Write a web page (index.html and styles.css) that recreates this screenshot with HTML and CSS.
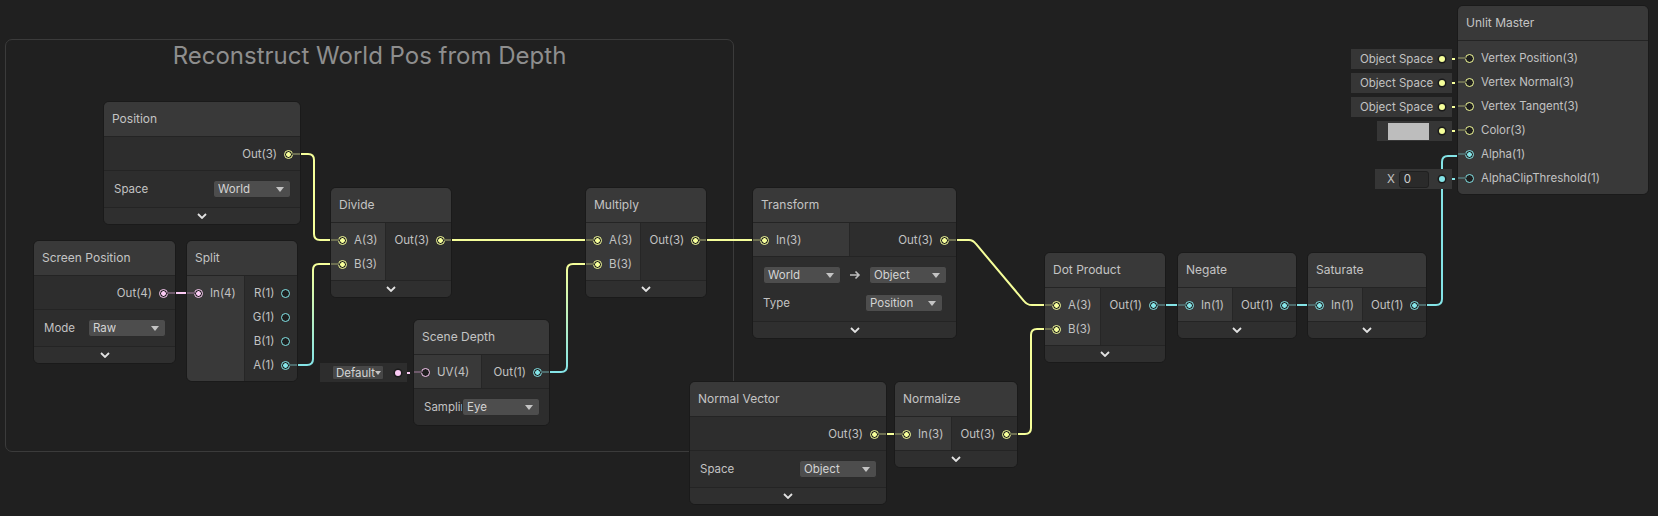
FILE: index.html
```html
<!DOCTYPE html>
<html lang="en">
<head>
  <meta charset="UTF-8" />
  <title>Shader Graph - Reconstruct World Pos</title>
  <link rel="stylesheet" href="styles.css">
</head>
<body>
  <div class="graph">

    <!-- Group -->
    <div class="group">
      <div class="group-title">Reconstruct World Pos from Depth</div>
    </div>

    <!-- Wires (behind nodes) -->
    <svg class="wires" width="1658" height="516" viewBox="0 0 1658 516">
      <defs>
        <linearGradient id="g1" gradientUnits="userSpaceOnUse" x1="0" y1="365" x2="0" y2="264">
          <stop offset="0" stop-color="#84e4e7"/>
          <stop offset="1" stop-color="#f6ff9a"/>
        </linearGradient>
        <linearGradient id="g2" gradientUnits="userSpaceOnUse" x1="0" y1="372" x2="0" y2="264">
          <stop offset="0" stop-color="#84e4e7"/>
          <stop offset="1" stop-color="#f6ff9a"/>
        </linearGradient>
      </defs>
      <g fill="none" stroke-width="2">
        <path stroke="#f6ff9a" d="M288,154 H308 Q314,154 314,160 V234 Q314,240 320,240 H343"/>
        <path stroke="url(#g1)" d="M286,365 H307 Q313,365 313,359 V270 Q313,264 319,264 H343"/>
        <path stroke="#fbcbf4" d="M163,293 H199"/>
        <path stroke="#f6ff9a" d="M439,240 H598"/>
        <path stroke="url(#g2)" d="M537,372 H561 Q567,372 567,366 V270 Q567,264 573,264 H598"/>
        <path stroke="#f6ff9a" d="M694,240 H765"/>
        <path stroke="#f6ff9a" d="M944,240 H969 Q973,240 976,244 L1024,301 Q1027,305 1032,305 H1057"/>
        <path stroke="#f6ff9a" d="M1005,434 H1025 Q1031,434 1031,428 V335 Q1031,329 1037,329 H1057"/>
        <path stroke="#f6ff9a" d="M874,434 H907"/>
        <path stroke="#84e4e7" d="M1153,305 H1190"/>
        <path stroke="#84e4e7" d="M1284,305 H1320"/>
        <path stroke="#84e4e7" d="M1414,305 H1436 Q1442,305 1442,299 V162 Q1442,156 1448,156 H1470"/>
      </g>
    </svg>

    <!-- Position -->
    <div class="node n-position">
      <div class="node-title">Position</div>
      <div class="ports">
        <div class="col out">
          <div class="port linked y"><span>Out(3)</span><i class="dot"></i></div>
        </div>
      </div>
      <div class="settings">
        <div class="setting"><span class="label">Space</span><div class="dropdown"><span>World</span><i class="caret"></i></div></div>
      </div>
      <div class="collapse"><svg width="10" height="6"><path d="M1 1l4 4 4-4" /></svg></div>
    </div>

    <!-- Screen Position -->
    <div class="node n-screen">
      <div class="node-title">Screen Position</div>
      <div class="ports">
        <div class="col out">
          <div class="port linked p"><span>Out(4)</span><i class="dot"></i></div>
        </div>
      </div>
      <div class="settings">
        <div class="setting"><span class="label">Mode</span><div class="dropdown"><span>Raw</span><i class="caret"></i></div></div>
      </div>
      <div class="collapse"><svg width="10" height="6"><path d="M1 1l4 4 4-4" /></svg></div>
    </div>

    <!-- Split -->
    <div class="node n-split">
      <div class="node-title">Split</div>
      <div class="ports last">
        <div class="col in">
          <div class="port linked p"><i class="dot"></i><span>In(4)</span></div>
        </div>
        <div class="col out">
          <div class="port c"><span>R(1)</span><i class="dot"></i></div>
          <div class="port c"><span>G(1)</span><i class="dot"></i></div>
          <div class="port c"><span>B(1)</span><i class="dot"></i></div>
          <div class="port linked c"><span>A(1)</span><i class="dot"></i></div>
        </div>
      </div>
    </div>

    <!-- Divide -->
    <div class="node n-divide">
      <div class="node-title">Divide</div>
      <div class="ports">
        <div class="col in">
          <div class="port linked y"><i class="dot"></i><span>A(3)</span></div>
          <div class="port linked y"><i class="dot"></i><span>B(3)</span></div>
        </div>
        <div class="col out">
          <div class="port linked y"><span>Out(3)</span><i class="dot"></i></div>
        </div>
      </div>
      <div class="collapse"><svg width="10" height="6"><path d="M1 1l4 4 4-4" /></svg></div>
    </div>

    <!-- Scene Depth -->
    <div class="inline-input n-default">
      <div class="dropdown mini"><span>Default</span><i class="caret"></i></div>
      <i class="wdot p"></i>
    </div>
    <div class="node n-depth">
      <div class="node-title">Scene Depth</div>
      <div class="ports">
        <div class="col in">
          <div class="port inline p"><i class="dot"></i><span>UV(4)</span></div>
        </div>
        <div class="col out">
          <div class="port linked c"><span>Out(1)</span><i class="dot"></i></div>
        </div>
      </div>
      <div class="settings last">
        <div class="setting"><span class="label clip">Sampling</span><div class="dropdown"><span>Eye</span><i class="caret"></i></div></div>
      </div>
    </div>

    <!-- Multiply -->
    <div class="node n-multiply">
      <div class="node-title">Multiply</div>
      <div class="ports">
        <div class="col in">
          <div class="port linked y"><i class="dot"></i><span>A(3)</span></div>
          <div class="port linked y"><i class="dot"></i><span>B(3)</span></div>
        </div>
        <div class="col out">
          <div class="port linked y"><span>Out(3)</span><i class="dot"></i></div>
        </div>
      </div>
      <div class="collapse"><svg width="10" height="6"><path d="M1 1l4 4 4-4" /></svg></div>
    </div>

    <!-- Transform -->
    <div class="node n-transform">
      <div class="node-title">Transform</div>
      <div class="ports">
        <div class="col in">
          <div class="port linked y"><i class="dot"></i><span>In(3)</span></div>
        </div>
        <div class="col out">
          <div class="port linked y"><span>Out(3)</span><i class="dot"></i></div>
        </div>
      </div>
      <div class="settings">
        <div class="setting">
          <div class="dropdown"><span>World</span><i class="caret"></i></div>
          <svg class="arrow" width="12" height="10" viewBox="0 0 12 10"><path d="M1 5h9M6.5 1.5L10 5l-3.5 3.5" /></svg>
          <div class="dropdown"><span>Object</span><i class="caret"></i></div>
        </div>
        <div class="setting type-row"><span class="label">Type</span><div class="dropdown"><span>Position</span><i class="caret"></i></div></div>
      </div>
      <div class="collapse"><svg width="10" height="6"><path d="M1 1l4 4 4-4" /></svg></div>
    </div>

    <!-- Normal Vector -->
    <div class="node n-normal">
      <div class="node-title">Normal Vector</div>
      <div class="ports">
        <div class="col out">
          <div class="port linked y"><span>Out(3)</span><i class="dot"></i></div>
        </div>
      </div>
      <div class="settings">
        <div class="setting"><span class="label">Space</span><div class="dropdown"><span>Object</span><i class="caret"></i></div></div>
      </div>
      <div class="collapse"><svg width="10" height="6"><path d="M1 1l4 4 4-4" /></svg></div>
    </div>

    <!-- Normalize -->
    <div class="node n-normalize">
      <div class="node-title">Normalize</div>
      <div class="ports">
        <div class="col in">
          <div class="port linked y"><i class="dot"></i><span>In(3)</span></div>
        </div>
        <div class="col out">
          <div class="port linked y"><span>Out(3)</span><i class="dot"></i></div>
        </div>
      </div>
      <div class="collapse"><svg width="10" height="6"><path d="M1 1l4 4 4-4" /></svg></div>
    </div>

    <!-- Dot Product -->
    <div class="node n-dot">
      <div class="node-title">Dot Product</div>
      <div class="ports">
        <div class="col in">
          <div class="port linked y"><i class="dot"></i><span>A(3)</span></div>
          <div class="port linked y"><i class="dot"></i><span>B(3)</span></div>
        </div>
        <div class="col out">
          <div class="port linked c"><span>Out(1)</span><i class="dot"></i></div>
        </div>
      </div>
      <div class="collapse"><svg width="10" height="6"><path d="M1 1l4 4 4-4" /></svg></div>
    </div>

    <!-- Negate -->
    <div class="node n-negate">
      <div class="node-title">Negate</div>
      <div class="ports">
        <div class="col in">
          <div class="port linked c"><i class="dot"></i><span>In(1)</span></div>
        </div>
        <div class="col out">
          <div class="port linked c"><span>Out(1)</span><i class="dot"></i></div>
        </div>
      </div>
      <div class="collapse"><svg width="10" height="6"><path d="M1 1l4 4 4-4" /></svg></div>
    </div>

    <!-- Saturate -->
    <div class="node n-saturate">
      <div class="node-title">Saturate</div>
      <div class="ports">
        <div class="col in">
          <div class="port linked c"><i class="dot"></i><span>In(1)</span></div>
        </div>
        <div class="col out">
          <div class="port linked c"><span>Out(1)</span><i class="dot"></i></div>
        </div>
      </div>
      <div class="collapse"><svg width="10" height="6"><path d="M1 1l4 4 4-4" /></svg></div>
    </div>

    <!-- Unlit Master inline inputs -->
    <div class="inline-input w-space1"><span>Object Space</span><i class="wdot y"></i></div>
    <div class="inline-input w-space2"><span>Object Space</span><i class="wdot y"></i></div>
    <div class="inline-input w-space3"><span>Object Space</span><i class="wdot y"></i></div>
    <div class="inline-input w-color"><i class="swatch"></i><i class="wdot y"></i></div>
    <div class="inline-input w-clip"><span class="axis">X</span><span class="field">0</span><i class="wdot c"></i></div>

    <!-- Unlit Master -->
    <div class="node n-master">
      <div class="node-title">Unlit Master</div>
      <div class="ports last">
        <div class="col in">
          <div class="port inline y"><i class="dot"></i><span>Vertex Position(3)</span></div>
          <div class="port inline y"><i class="dot"></i><span>Vertex Normal(3)</span></div>
          <div class="port inline y"><i class="dot"></i><span>Vertex Tangent(3)</span></div>
          <div class="port inline y"><i class="dot"></i><span>Color(3)</span></div>
          <div class="port linked c"><i class="dot"></i><span>Alpha(1)</span></div>
          <div class="port inline c"><i class="dot"></i><span>AlphaClipThreshold(1)</span></div>
        </div>
      </div>
    </div>

  </div>
</body>
</html>
```

FILE: styles.css
```css
body {
  margin: 0;
  background-color: #202020;
  font-family: Inter, "Noto Sans", sans-serif;
  overflow: hidden;
}

.graph {
  position: relative;
  width: 1658px;
  height: 516px;
}

.wires {
  position: absolute;
  left: 0;
  top: 0;
}

/* Group box */
.group {
  position: absolute;
  left: 5px;
  top: 39px;
  width: 729px;
  height: 413px;
  box-sizing: border-box;
  border: 1px solid #3b3b3b;
  border-radius: 7px;
}

.group-title {
  text-align: center;
  font-size: 24px;
  line-height: 30px;
  padding-top: 1px;
  color: #8e8e8e;
}

/* Nodes */
.node {
  position: absolute;
  box-sizing: border-box;
  background-color: #2d2d2d;
  border: 1px solid #1a1a1a;
  border-radius: 6px;
  overflow: hidden;
}

.node-title {
  height: 34px;
  line-height: 34px;
  padding: 0 8px;
  background-color: #393939;
  border-bottom: 1px solid #242424;
  color: #c4c4c4;
  font-size: 12px;
  white-space: nowrap;
}

.ports {
  display: flex;
  border-bottom: 1px solid #242424;
}

.ports.last {
  border-bottom: none;
}

.col {
  flex: 1 1 auto;
  padding: 5px 0 4px;
}

.col.in {
  background-color: #393939;
}

.col.in + .col.out {
  border-left: 1px solid #262626;
}

.col.out {
  background-color: #2d2d2d;
}

.port {
  --pc: #f6ff9a;
  --stub: #6d6f52;
  height: 24px;
  display: flex;
  align-items: center;
  gap: 7px;
  font-size: 11.5px;
  color: #c2c2c2;
  white-space: nowrap;
}

.port.c {
  --pc: #84e4e7;
  --stub: #4d6b6c;
}

.port.p {
  --pc: #fbcbf4;
  --stub: #6e5a6b;
}

.col.in .port {
  padding: 0 8px 0 7px;
}

.col.out .port {
  justify-content: flex-end;
  padding: 0 7px 0 8px;
}

.dot {
  position: relative;
  flex: none;
  width: 9px;
  height: 9px;
  box-sizing: border-box;
  border: 1.5px solid var(--pc);
  border-radius: 50%;
  background-color: #1e1e1e;
}

.port.linked .dot {
  background: radial-gradient(circle, var(--pc) 0 2px, #1e1e1e 2.6px);
}

.port.linked .dot::before,
.port.inline .dot::before {
  content: '';
  position: absolute;
  top: 2px;
  width: 8px;
  height: 2px;
  background-color: var(--stub);
}

.col.in .port .dot::before {
  right: 100%;
}

.col.out .port .dot::before {
  left: 100%;
}

/* Settings */
.settings {
  display: flex;
  flex-direction: column;
  gap: 8px;
  padding: 8px 9px 8px 10px;
  border-bottom: 1px solid #242424;
  background-color: #2d2d2d;
}

.settings.last {
  border-bottom: none;
}

.setting {
  height: 20px;
  display: flex;
  align-items: center;
  justify-content: space-between;
  font-size: 11.5px;
  color: #c2c2c2;
}

.setting.type-row {
  padding-right: 4px;
}

.label.clip {
  flex: 1;
  min-width: 0;
  overflow: hidden;
  white-space: nowrap;
}

.dropdown {
  flex: none;
  width: 78px;
  height: 18px;
  box-sizing: border-box;
  display: flex;
  align-items: center;
  justify-content: space-between;
  padding: 0 6px 0 4px;
  background-color: #4d4d4d;
  border: 1px solid #2c2c2c;
  border-radius: 3px;
  color: #d4d4d4;
  font-size: 11.5px;
  overflow: hidden;
}

.dropdown span {
  overflow: hidden;
  white-space: nowrap;
}

.caret {
  flex: none;
  width: 0;
  height: 0;
  border-left: 4px solid transparent;
  border-right: 4px solid transparent;
  border-top: 5px solid #c4c4c4;
}

.dropdown.mini {
  width: 52px;
  height: 15px;
  padding: 0 3px 0 3px;
  border-radius: 2px;
  background-color: #474747;
  justify-content: flex-start;
}

.dropdown.mini span {
  width: 39px;
  flex: none;
}

.dropdown.mini .caret {
  border-left-width: 3.5px;
  border-right-width: 3.5px;
  border-top-width: 4px;
}

.arrow path {
  fill: none;
  stroke: #bdbdbd;
  stroke-width: 1.6;
}

.collapse {
  height: 16px;
  display: flex;
  align-items: center;
  justify-content: center;
  background-color: #2f2f2f;
}

.collapse path {
  fill: none;
  stroke: #e2e2e2;
  stroke-width: 1.8;
}

/* Inline port inputs */
.inline-input {
  position: absolute;
  height: 20px;
  box-sizing: border-box;
  display: flex;
  align-items: center;
  justify-content: space-between;
  padding: 0 7px 0 9px;
  background-color: #363636;
  font-size: 11.5px;
  color: #c2c2c2;
}

.inline-input::after {
  content: '';
  position: absolute;
  left: 100%;
  top: 9px;
  width: 5px;
  height: 2px;
  background: repeating-linear-gradient(90deg, var(--wc) 0 3px, transparent 3px 5px);
}

.inline-input { --wc: #f6ff9a; }
.n-default { --wc: #fbcbf4; }
.w-clip { --wc: #84e4e7; }

.wdot {
  flex: none;
  width: 6px;
  height: 6px;
  border-radius: 50%;
  background-color: var(--wc);
  box-shadow: 0 0 0 1.5px #1b1b1b;
}

.swatch {
  width: 41px;
  height: 17px;
  background-color: #bdbdbd;
}

.axis {
  color: #c2c2c2;
}

.field {
  width: 30px;
  height: 17px;
  box-sizing: border-box;
  margin-left: 4px;
  margin-right: auto;
  padding-left: 4px;
  line-height: 15px;
  background-color: #2a2a2a;
  border: 1px solid #1f1f1f;
  border-radius: 3px;
  color: #d0d0d0;
}

/* Placement of nodes on the canvas */
.n-position  { left: 103px;  top: 101px; width: 198px; }
.n-screen    { left: 33px;   top: 240px; width: 143px; }
.n-split     { left: 186px;  top: 240px; width: 112px; }
.n-divide    { left: 330px;  top: 187px; width: 122px; }
.n-depth     { left: 413px;  top: 319px; width: 137px; }
.n-multiply  { left: 585px;  top: 187px; width: 122px; }
.n-transform { left: 752px;  top: 187px; width: 205px; }
.n-normal    { left: 689px;  top: 381px; width: 198px; }
.n-normalize { left: 894px;  top: 381px; width: 124px; }
.n-dot       { left: 1044px; top: 252px; width: 122px; }
.n-negate    { left: 1177px; top: 252px; width: 120px; }
.n-saturate  { left: 1307px; top: 252px; width: 120px; }
.n-master    { left: 1457px; top: 5px;   width: 192px; }

.n-default  { left: 320px;  top: 363px; width: 87px; height: 19px; padding: 0 7px 0 12px; background-color: #2d2d2d; justify-content: flex-start; gap: 11px; }
.w-space1   { left: 1351px; top: 49px;  width: 101px; }
.w-space2   { left: 1351px; top: 73px;  width: 101px; }
.w-space3   { left: 1351px; top: 97px;  width: 101px; }
.w-color    { left: 1377px; top: 121px; width: 75px; padding-left: 11px; }
.w-clip     { left: 1375px; top: 169px; width: 77px; padding-left: 12px; }
```
